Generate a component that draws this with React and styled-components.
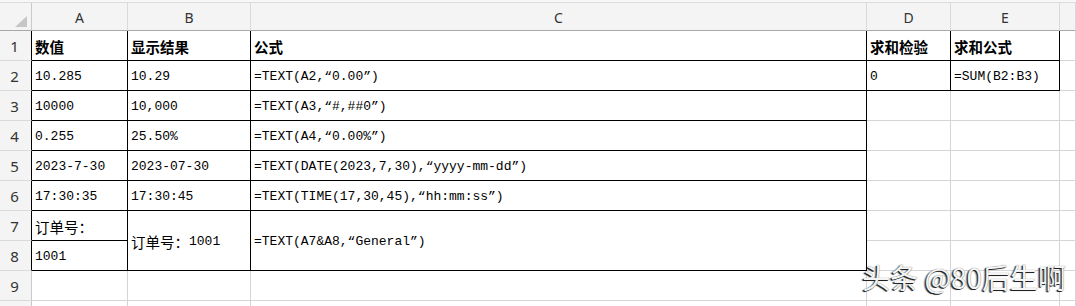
import React from 'react';
import styled, { createGlobalStyle } from 'styled-components';

const Global = createGlobalStyle`
  html, body { margin: 0; padding: 0; background: #fff; }
  body { width: 1076px; height: 306px; overflow: hidden; }
`;

const GRID = '#d5d5d8';

const Sheet = styled.div`
  position: relative;
  width: 1076px;
  height: 306px;
  overflow: hidden;
  background: #fff;
`;

const TopStrip = styled.div`
  height: 2px;
  background: #f7f7f7;
  border-bottom: 1px solid #dcdcdc;
`;

const Grid = styled.div`
  display: grid;
  grid-template-columns: 32px 96px 123px 616px 84px 109px 1fr;
  grid-template-rows: 28px repeat(10, 30px);
`;

const Corner = styled.div`
  background: #f4f4f4;
  border-right: 1px solid #c9c9c9;
  border-bottom: 1px solid #a8a8a8;
  display: flex;
  align-items: flex-end;
  justify-content: flex-end;
  padding: 0 4px 3px 0;
  box-sizing: border-box;
`;

const ColHead = styled.div`
  background: #f4f4f4;
  border-right: 1px solid #dadada;
  border-bottom: 1px solid #a8a8a8;
  display: flex;
  align-items: center;
  justify-content: center;
  font-family: 'Noto Sans', 'Liberation Sans', sans-serif;
  font-size: 14px;
  color: #333;
  padding-top: 1px;
  box-sizing: border-box;
`;

const RowHead = styled.div`
  background: #f4f4f4;
  border-right: 1px solid ${(p) => (p.$dark ? '#000' : '#c9c9c9')};
  border-bottom: 1px solid #dadada;
  display: flex;
  align-items: center;
  justify-content: center;
  font-family: 'Noto Sans', 'Liberation Sans', sans-serif;
  font-size: 15px;
  color: #333;
  padding-right: 2px;
  box-sizing: border-box;
`;

const Cell = styled.div`
  grid-row: ${(p) => (p.$span ? `span ${p.$span}` : 'auto')};
  border-right: 1px solid ${(p) => (p.$r ? '#000' : GRID)};
  border-bottom: 1px solid ${(p) => (p.$b ? '#000' : GRID)};
  display: flex;
  align-items: center;
  padding: 2px 0 0 3px;
  box-sizing: border-box;
  white-space: pre;
  overflow: hidden;
  font-family: ${(p) => (p.$bold ? "'Noto Sans CJK SC', sans-serif" : "'Liberation Mono', 'Noto Sans CJK SC', monospace")};
  font-weight: ${(p) => (p.$bold ? 700 : 400)};
  font-size: ${(p) => (p.$bold ? '15.5px' : '13px')};
  color: #000;
`;

const Cjk = styled.span`
  font-family: 'Noto Sans CJK SC', sans-serif;
  font-size: 14.5px;
`;

const Watermark = styled.div`
  position: absolute;
  right: 10px;
  top: 257px;
  font-family: 'Noto Sans CJK SC', 'Noto Sans', sans-serif;
  font-size: 28px;
  color: #f4f4f4;
  text-shadow: -1px 1px 0 #222, -2px 1px 1px rgba(0, 0, 0, 0.45), 0 0 1px #555;
  white-space: nowrap;
  pointer-events: none;
`;

const CornerMark = () => (
  <svg width="12" height="11" viewBox="0 0 12 11">
    <polygon points="12,0 12,11 0,11" fill="#c6c6c6" />
  </svg>
);

const renderText = (t) => {
  if (!t) return null;
  const parts = t.split(/([\u3000-\u9fff\uff00-\uffef]+)/);
  return parts.map((s, i) =>
    /[\u3000-\u9fff\uff00-\uffef]/.test(s) ? <Cjk key={i}>{s}</Cjk> : s
  );
};

const cols = ['A', 'B', 'C', 'D', 'E', ''];

const rows = [
  [
    { t: '数值', r: 1, b: 1, bold: 1 },
    { t: '显示结果', r: 1, b: 1, bold: 1 },
    { t: '公式', r: 1, b: 1, bold: 1 },
    { t: '求和检验', r: 1, b: 1, bold: 1 },
    { t: '求和公式', r: 1, b: 1, bold: 1 },
    {},
  ],
  [
    { t: '10.285', r: 1, b: 1 },
    { t: '10.29', r: 1, b: 1 },
    { t: '=TEXT(A2,“0.00”)', r: 1, b: 1 },
    { t: '0', r: 1, b: 1 },
    { t: '=SUM(B2:B3)', r: 1, b: 1 },
    {},
  ],
  [
    { t: '10000', r: 1, b: 1 },
    { t: '10,000', r: 1, b: 1 },
    { t: '=TEXT(A3,“#,##0”)', r: 1, b: 1 },
    {},
    {},
    {},
  ],
  [
    { t: '0.255', r: 1, b: 1 },
    { t: '25.50%', r: 1, b: 1 },
    { t: '=TEXT(A4,“0.00%”)', r: 1, b: 1 },
    {},
    {},
    {},
  ],
  [
    { t: '2023-7-30', r: 1, b: 1 },
    { t: '2023-07-30', r: 1, b: 1 },
    { t: '=TEXT(DATE(2023,7,30),“yyyy-mm-dd”)', r: 1, b: 1 },
    {},
    {},
    {},
  ],
  [
    { t: '17:30:35', r: 1, b: 1 },
    { t: '17:30:45', r: 1, b: 1 },
    { t: '=TEXT(TIME(17,30,45),“hh:mm:ss”)', r: 1, b: 1 },
    {},
    {},
    {},
  ],
  [
    { t: '订单号：', r: 1, b: 1 },
    { t: '订单号：1001', r: 1, b: 1, span: 2 },
    { t: '=TEXT(A7&A8,“General”)', r: 1, b: 1, span: 2 },
    {},
    {},
    {},
  ],
  [{ t: '1001', r: 1, b: 1 }, {}, {}, {}],
  [{}, {}, {}, {}, {}, {}],
  [{}, {}, {}, {}, {}, {}],
];

export default function App() {
  return (
    <Sheet>
      <Global />
      <TopStrip />
      <Grid>
        <Corner>
          <CornerMark />
        </Corner>
        {cols.map((c, i) => (
          <ColHead key={i}>{c}</ColHead>
        ))}
        {rows.map((cells, ri) => (
          <React.Fragment key={ri}>
            <RowHead $dark={ri < 8}>{ri < 9 ? ri + 1 : ''}</RowHead>
            {cells.map((c, ci) => (
              <Cell key={ci} $r={c.r} $b={c.b} $bold={c.bold} $span={c.span}>
                {renderText(c.t)}
              </Cell>
            ))}
          </React.Fragment>
        ))}
      </Grid>
      <Watermark>头条 @80后生啊</Watermark>
    </Sheet>
  );
}
